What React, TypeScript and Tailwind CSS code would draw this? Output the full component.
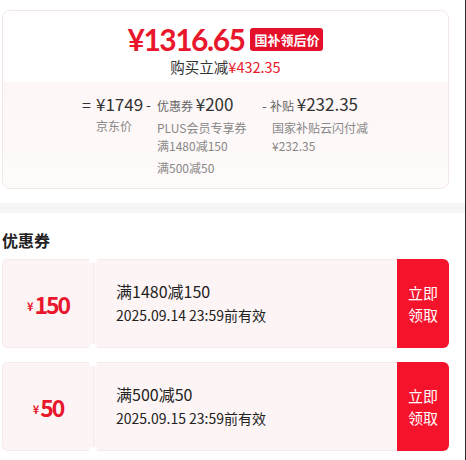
import React from "react";

const font = { fontFamily: '"Noto Sans CJK SC", "Noto Sans", sans-serif' };
const priceFont = { fontFamily: 'Lato, "Noto Sans CJK SC", sans-serif' };

function Coupon({ amount, title, date }: { amount: string; title: string; date: string }) {
  return (
    <div className="relative flex h-[89px] w-[447px]">
      <div className="flex w-[91px] items-center justify-center rounded-l-[6px] border border-r-0 border-[#f6e9ea] bg-[#fdf5f5] pt-[1px]">
        <span className="mr-[1px] mt-[5px] text-[11px] font-bold text-[#e8172c]">¥</span>
        <span className="text-[23px] font-bold leading-none tracking-[-2px] text-[#e8172c]">{amount}</span>
      </div>
      <div className="flex flex-1 flex-col justify-center border-y border-l border-[#f6e9ea] bg-[#fdf5f5] pl-[22px] pb-[2px]">
        <div className="text-[16px] leading-[24px] text-[#222]">{title}</div>
        <div className="text-[14px] leading-[24px] text-[#222]">{date}</div>
      </div>
      <div className="flex w-[52px] flex-col items-center justify-center rounded-r-[6px] bg-[#f5122b] text-[15px] leading-[22px] text-white">
        <span>立即</span>
        <span>领取</span>
      </div>
      <div className="absolute left-[87px] top-[-4px] h-[8px] w-[8px] rounded-full bg-white" />
      <div className="absolute left-[87px] bottom-[-4px] h-[8px] w-[8px] rounded-full bg-white" />
    </div>
  );
}

export default function App() {
  return (
    <div className="h-[460px] w-[466px] overflow-hidden border-r border-[#2b2b2b] bg-white" style={font}>
      <div className="pl-[2px] pt-[10px]">
        <div className="w-[447px] overflow-hidden rounded-[8px] border border-[#f3e6e7]">
          <div className="flex h-[71px] flex-col items-center bg-white pt-[12px]">
            <div className="flex h-[32px] items-center">
              <span className="text-[30px] font-bold leading-[32px] tracking-[-1.5px] text-[#e8172c]" style={priceFont}>¥1316.65</span>
              <span className="ml-[6px] mt-[1px] rounded-[3px] bg-[#e5102a] px-[4px] text-[13px] font-bold leading-[23px] text-white">国补领后价</span>
            </div>
            <div className="mt-[2px] text-[14.5px] leading-[20px] text-[#333]">
              购买立减<span className="text-[#e8172c]">¥432.35</span>
            </div>
          </div>
          <div className="flex h-[106px] bg-gradient-to-b from-[#fdf6f6] to-[#fffbfb] pl-[79px] pt-[11px]">
            <div className="flex text-[#333]">
              <span className="w-[14px] text-[16px] leading-[22px]">=</span>
              <div className="flex w-[50px] flex-col">
                <span className="text-[17px] leading-[22px]">¥1749</span>
                <span className="mt-[2px] text-[12px] leading-[18px] text-[#888]">京东价</span>
              </div>
              <span className="w-[11px] text-[14px] leading-[22px]">-</span>
              <div className="flex w-[105px] flex-col">
                <span className="leading-[22px]">
                  <span className="text-[12px] text-[#666]">优惠券 </span>
                  <span className="text-[17px]">¥200</span>
                </span>
                <span className="mt-[2px] text-[12px] leading-[18px] text-[#888]">PLUS会员专享券</span>
                <span className="text-[12px] leading-[18px] text-[#888]">满1480减150</span>
                <span className="mt-[4px] text-[12px] leading-[18px] text-[#888]">满500减50</span>
              </div>
              <div className="flex flex-col">
                <span className="leading-[22px]">
                  <span className="text-[14px] text-[#666]">- </span>
                  <span className="text-[12px] text-[#666]">补贴 </span>
                  <span className="text-[17px]">¥232.35</span>
                </span>
                <span className="mt-[2px] pl-[10px] text-[12px] leading-[18px] text-[#888]">国家补贴云闪付减</span>
                <span className="pl-[10px] text-[12px] leading-[18px] text-[#888]">¥232.35</span>
              </div>
            </div>
          </div>
        </div>
      </div>
      <div className="mt-[14px] h-[10px] w-full bg-[#f6f6f8]" />
      <div className="pl-[2px]">
        <div className="pt-[16px] text-[16px] font-bold leading-[22px] text-[#222]">优惠券</div>
        <div className="mt-[8px] flex flex-col gap-[14px]">
          <Coupon amount="150" title="满1480减150" date="2025.09.14 23:59前有效" />
          <Coupon amount="50" title="满500减50" date="2025.09.15 23:59前有效" />
        </div>
      </div>
    </div>
  );
}
